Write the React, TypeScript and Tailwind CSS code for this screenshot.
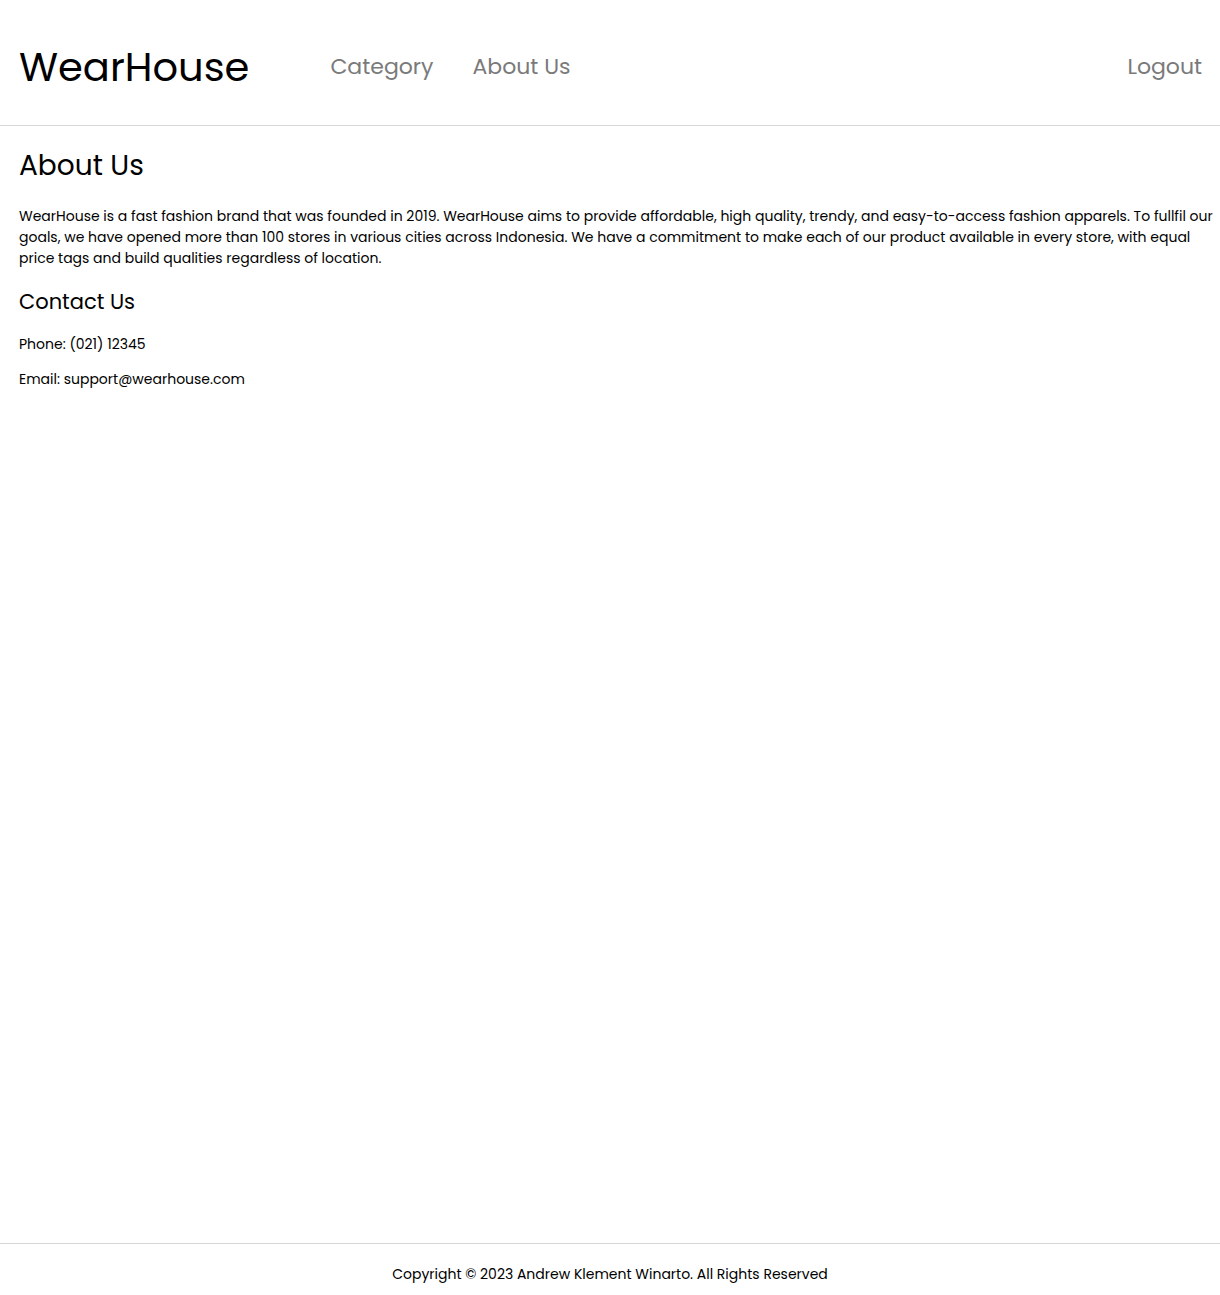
const FONT = "font-['Poppins','DejaVu_Sans',sans-serif]";

export default function App() {
  return (
    <div className={`flex min-h-screen flex-col bg-white text-black ${FONT}`}>
      <header className="flex h-[126px] items-center border-b border-[#d6d6d6] pl-[19px] pr-[18px] pt-[8px]">
        <a href="#" className="text-[40px] leading-none text-black">WearHouse</a>
        <nav className="ml-[81px] flex gap-[39px] text-[22px] text-[#7a7a7a]">
          <a href="#">Category</a>
          <a href="#">About Us</a>
        </nav>
        <a href="#" className="ml-auto text-[22px] text-[#7a7a7a]">Logout</a>
      </header>

      <main className="flex-1 pl-[19px] pr-[4px] pt-[20px]">
        <h1 className="text-[28px] leading-[40px]">About Us</h1>
        <p className="mt-[20px] text-[14px] leading-[21px]">
          WearHouse is a fast fashion brand that was founded in 2019. WearHouse aims to provide affordable, high quality, trendy, and easy-to-access fashion apparels. To fullfil our goals, we have opened more than 100 stores in various cities across Indonesia. We have a commitment to make each of our product available in every store, with equal price tags and build qualities regardless of location.
        </p>
        <h2 className="mt-[18px] text-[21px] leading-[30px]">Contact Us</h2>
        <p className="mt-[17px] text-[14px] leading-[21px]">Phone: (021) 12345</p>
        <p className="mt-[14px] text-[14px] leading-[21px]">Email: support@wearhouse.com</p>
      </main>

      <footer className="flex h-[52px] items-center justify-center border-t border-[#d6d6d6] pt-[10px]">
        <p className="text-[14px]">Copyright © 2023 Andrew Klement Winarto. All Rights Reserved</p>
      </footer>
    </div>
  );
}
